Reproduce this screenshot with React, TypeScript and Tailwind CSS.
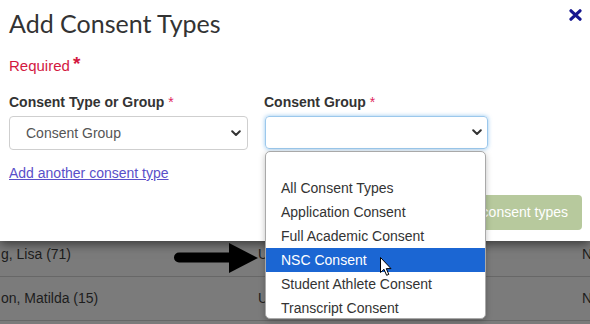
import React from "react";

function Chevron() {
  return (
    <svg width="10" height="7" viewBox="0 0 10 7" className="block">
      <path d="M1.2 1.2 L5 5 L8.8 1.2" fill="none" stroke="#333" strokeWidth="2" strokeLinecap="round" strokeLinejoin="round" />
    </svg>
  );
}

const items = [
  "",
  "All Consent Types",
  "Application Consent",
  "Full Academic Consent",
  "NSC Consent",
  "Student Athlete Consent",
  "Transcript Consent",
];

export default function App() {
  return (
    <div className="relative w-[590px] h-[324px] overflow-hidden bg-[#7b7b7b] font-['Liberation_Sans',Arial,sans-serif] text-[14px]">
      {/* background table */}
      <div className="pt-[233px] text-[#1d1d1d] text-[14px]">
        {[
          ["g, Lisa (71)", "U", "N"],
          ["on, Matilda (15)", "U", "N"],
        ].map((r, i) => (
          <div key={i} className="grid grid-cols-[258px_324px_1fr] items-center h-[44px] border-b border-[#676767]">
            <div className="pl-[1px]">{r[0]}</div>
            <div>{r[1]}</div>
            <div>{r[2]}</div>
          </div>
        ))}
      </div>

      {/* modal */}
      <div className="absolute left-0 top-0 w-full h-[241px] bg-white shadow-[0_3px_10px_rgba(0,0,0,0.55)] pl-[9px] pr-[8px]">
        <div className="flex justify-between items-start pt-[8px]">
          <h1 className="font-['Lato',sans-serif] text-[25px] leading-[30px] text-[#333]">Add Consent Types</h1>
          <svg width="13" height="12" viewBox="0 0 13 12" className="mt-[1px] block">
            <path d="M2 1.8 L11 10.2 M11 1.8 L2 10.2" stroke="#14148f" strokeWidth="3.2" strokeLinecap="round" />
          </svg>
        </div>
        <div className="mt-[19px] leading-[18px] text-[15px] text-[#d3193f] flex items-start">
          Required<span className="ml-[3px] text-[19px] font-bold leading-[14px]">*</span>
        </div>
        <div className="mt-[19px] grid grid-cols-[239px_223px] gap-x-[16px]">
          <div className="font-bold text-[#333] leading-[17px]">
            Consent Type or Group <span className="text-[#e0245e] font-normal">*</span>
          </div>
          <div className="font-bold text-[#333] leading-[17px]">
            Consent Group <span className="text-[#e0245e] font-normal">*</span>
          </div>
          <div className="mt-[5px] h-[34px] rounded-[4px] border border-[#cfcfcf] flex items-center justify-between pl-[16px] pr-[6px] text-[#555]">
            <span>Consent Group</span>
            <Chevron />
          </div>
          <div className="mt-[5px] h-[33px] rounded-[4px] border border-[#9cc8ec] shadow-[0_0_4px_rgba(102,175,233,0.7)] flex items-center justify-end pr-[5px] ml-[1px] -mr-[1px]">
            <Chevron />
          </div>
        </div>
        <div className="mt-[15px] leading-[17px]">
          <a className="text-[#5a4fc9] underline">Add another consent type</a>
        </div>
        <div className="mt-[13px] flex justify-end">
          <div className="h-[35px] rounded-[4px] bg-[#b7c99d] text-white px-[14px] flex items-center">
            Add consent types
          </div>
        </div>
      </div>

      {/* dropdown list */}
      <div className="absolute left-[265px] top-[151px] w-[221px] h-[168px] bg-white border border-[#a9a9a9] rounded-[5px] overflow-hidden shadow-[0_2px_6px_rgba(0,0,0,0.25)] text-[#333]">
        {items.map((t, i) => (
          <div
            key={i}
            className={
              "h-[24px] flex items-center pl-[15px] " +
              (t === "NSC Consent" ? "bg-[#1b66d3] text-white" : "")
            }
          >
            {t}
          </div>
        ))}
      </div>

      {/* arrow annotation */}
      <svg className="absolute left-[170px] top-[240px]" width="92" height="36" viewBox="0 0 92 36">
        <line x1="9" y1="17.5" x2="62" y2="17.5" stroke="#000" strokeWidth="10" strokeLinecap="round" />
        <polygon points="59,3 88,18 59,33" fill="#000" />
      </svg>

      {/* mouse cursor */}
      <svg className="absolute left-[380px] top-[257px]" width="13" height="20" viewBox="0 0 13 20">
        <path d="M0.5 0.5 L0.5 15.5 L4 12.3 L6.6 18.3 L8.8 17.4 L6.3 11.6 L11 11.6 Z" fill="#fff" stroke="#000" strokeWidth="1" strokeLinejoin="round" />
      </svg>
    </div>
  );
}
